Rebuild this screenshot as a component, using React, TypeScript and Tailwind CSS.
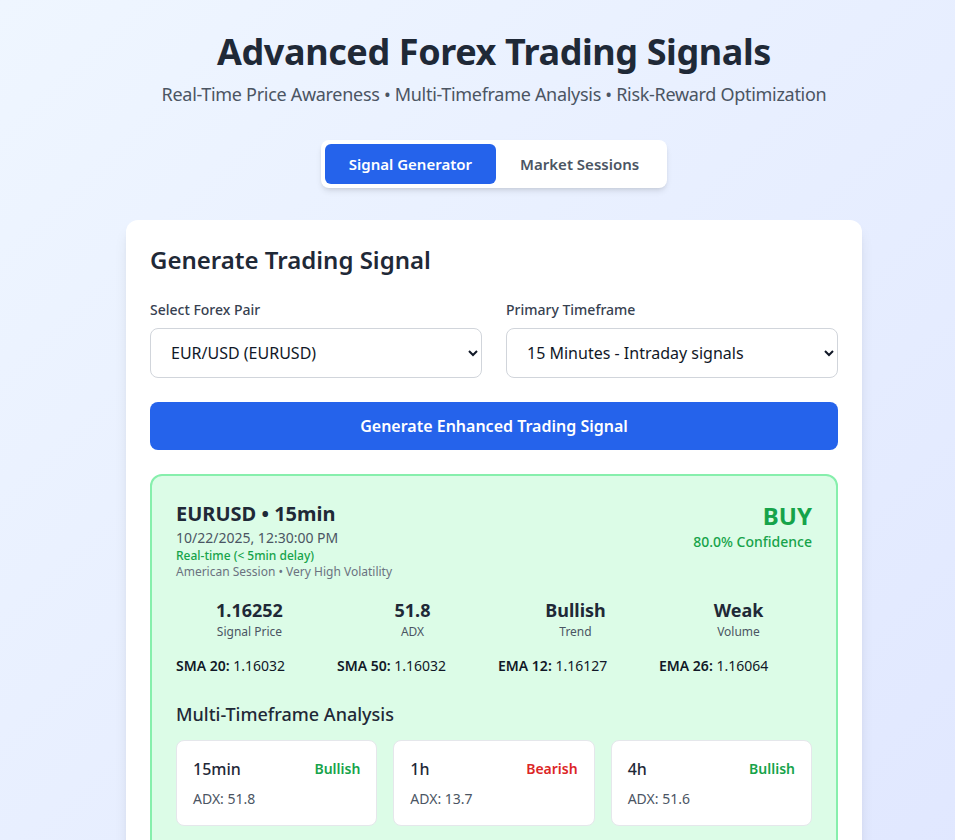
import { useState } from "react";

const FONT = { fontFamily: '"Noto Sans", "Open Sans", sans-serif' };

function App() {
	const [tab, setTab] = useState("signal");
	return (
		<div
			className="min-h-screen bg-gradient-to-br from-[#eff6ff] to-[#e0e7ff] pt-8 pb-10 pl-[33px]"
			style={FONT}
		>
			<div className="mx-auto w-[736px]">
				<Header />
				<Tabs tab={tab} setTab={setTab} />
				<GeneratorCard />
			</div>
		</div>
	);
}

export default App;

function Header() {
	return (
		<div className="text-center mb-8 -mx-20">
			<h1 className="text-4xl font-bold text-[#1f2937] mb-2 tracking-[-0.4px]">
				Advanced Forex Trading Signals
			</h1>
			<p className="text-lg text-[#4b5563] tracking-[-0.3px]">
				Real-Time Price Awareness • Multi-Timeframe Analysis • Risk-Reward
				Optimization
			</p>
		</div>
	);
}

function Tabs({ tab, setTab }: { tab: string; setTab: (t: string) => void }) {
	const items = [
		{ id: "signal", label: "Signal Generator" },
		{ id: "sessions", label: "Market Sessions" },
	];
	return (
		<div className="flex justify-center mb-8">
			<div className="flex bg-white rounded-lg p-1 shadow-md">
				{items.map((t) => (
					<button
						key={t.id}
						onClick={() => setTab(t.id)}
						className={
							tab === t.id
								? "px-6 py-2 rounded-md text-[15px] leading-6 font-semibold bg-[#2563eb] text-white"
								: "px-6 py-2 rounded-md text-[15px] leading-6 font-semibold text-[#4b5563]"
						}
					>
						{t.label}
					</button>
				))}
			</div>
		</div>
	);
}

function GeneratorCard() {
	return (
		<div className="bg-white rounded-xl shadow-lg p-6">
			<h2 className="text-2xl font-semibold text-[#1f2937] mb-6">
				Generate Trading Signal
			</h2>
			<div className="grid grid-cols-2 gap-6 mb-6">
				<div>
					<label className="block text-sm font-medium text-[#374151] mb-2">
						Select Forex Pair
					</label>
					<select
						className="w-full px-4 py-3 border border-[#d1d5db] rounded-lg bg-white text-[#111827] text-base"
						defaultValue="EURUSD"
					>
						<option value="EURUSD">EUR/USD (EURUSD)</option>
						<option value="GBPUSD">GBP/USD (GBPUSD)</option>
					</select>
				</div>
				<div>
					<label className="block text-sm font-medium text-[#374151] mb-2">
						Primary Timeframe
					</label>
					<select
						className="w-full px-4 py-3 border border-[#d1d5db] rounded-lg bg-white text-[#111827] text-base"
						defaultValue="15min"
					>
						<option value="15min">15 Minutes - Intraday signals</option>
						<option value="1h">1 Hour - Swing signals</option>
					</select>
				</div>
			</div>
			<button className="w-full py-3 rounded-lg bg-[#2563eb] text-white font-semibold text-base">
				Generate Enhanced Trading Signal
			</button>
			<SignalResult />
		</div>
	);
}

function SignalResult() {
	const stats = [
		{ value: "1.16252", label: "Signal Price" },
		{ value: "51.8", label: "ADX" },
		{ value: "Bullish", label: "Trend" },
		{ value: "Weak", label: "Volume" },
	];
	const mas = [
		{ k: "SMA 20:", v: "1.16032" },
		{ k: "SMA 50:", v: "1.16032" },
		{ k: "EMA 12:", v: "1.16127" },
		{ k: "EMA 26:", v: "1.16064" },
	];
	const frames = [
		{ tf: "15min", trend: "Bullish", adx: "51.8" },
		{ tf: "1h", trend: "Bearish", adx: "13.7" },
		{ tf: "4h", trend: "Bullish", adx: "51.6" },
	];
	return (
		<div className="mt-6 rounded-xl border-2 border-[#86efac] bg-[#dcfce7] p-6">
			<div className="flex justify-between items-start mb-4">
				<div>
					<div className="text-xl font-bold text-[#1f2937]">EURUSD • 15min</div>
					<div className="text-sm text-[#4b5563]">10/22/2025, 12:30:00 PM</div>
					<div className="text-xs font-medium text-[#16a34a]">
						Real-time (&lt; 5min delay)
					</div>
					<div className="text-xs text-[#6b7280]">
						American Session • Very High Volatility
					</div>
				</div>
				<div className="text-right">
					<div className="text-2xl font-bold text-[#16a34a]">BUY</div>
					<div className="text-sm font-medium text-[#16a34a]">
						80.0% Confidence
					</div>
				</div>
			</div>
			<div className="grid grid-cols-4 gap-4 mb-4 text-center">
				{stats.map((s) => (
					<div key={s.label}>
						<div className="text-lg font-bold text-[#1f2937]">{s.value}</div>
						<div className="text-xs text-[#4b5563]">{s.label}</div>
					</div>
				))}
			</div>
			<div className="grid grid-cols-4 gap-2 text-sm text-[#111827]">
				{mas.map((m) => (
					<div key={m.k}>
						<span className="font-semibold">{m.k}</span> {m.v}
					</div>
				))}
			</div>
			<h3 className="mt-6 mb-3 text-lg font-medium text-[#1f2937]">
				Multi-Timeframe Analysis
			</h3>
			<div className="grid grid-cols-3 gap-4">
				{frames.map((f) => (
					<div
						key={f.tf}
						className="bg-white rounded-lg border border-[#e5e7eb] p-4"
					>
						<div className="flex justify-between items-center mb-2">
							<span className="font-medium text-[#1f2937]">{f.tf}</span>
							<span
								className={
									f.trend === "Bullish"
										? "text-sm font-semibold text-[#16a34a]"
										: "text-sm font-semibold text-[#dc2626]"
								}
							>
								{f.trend}
							</span>
						</div>
						<div className="text-sm text-[#4b5563]">ADX: {f.adx}</div>
					</div>
				))}
			</div>
		</div>
	);
}
